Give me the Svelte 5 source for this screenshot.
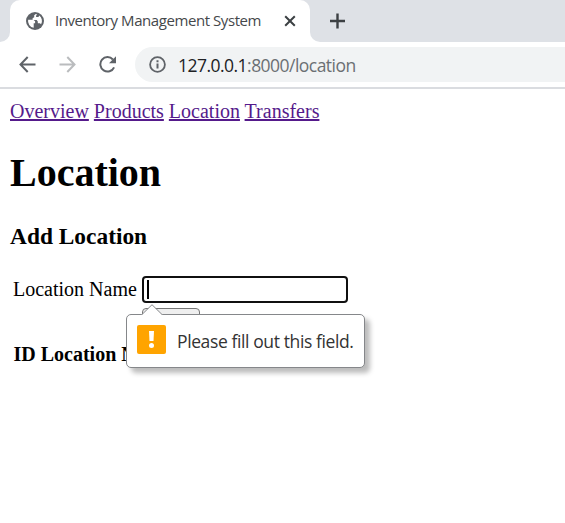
<script>
  const links = ['Overview', 'Products', 'Location', 'Transfers'];
</script>

<div class="window">
  <div class="tabs">
    <div class="edge"></div>
    <div class="tab">
      <svg class="globe" width="18" height="18" viewBox="0 0 18 18">
        <circle cx="9" cy="9" r="9" fill="#5f6368" />
        <path d="M9.8 2 8.2 3.3v1.9L6.6 6.3v1.8h4.1l1.1 1.3v1.8h2.1l1.2 1.1A7 7 0 0 0 13.2 3.4l-.7 1.5h-2.4V3.7L11 2.3z" fill="#fff" />
        <path d="M2.1 7.7h5.2l1.8 1.6v1.9H7.7v4.6A7 7 0 0 1 2.1 7.7z" fill="#fff" />
      </svg>
      <span class="title">Inventory Management System</span>
      <svg class="close" width="12" height="12" viewBox="0 0 12 12"><path d="m1.2 1.2 9.6 9.6m0-9.6-9.6 9.6" stroke="#3c4043" stroke-width="2" /></svg>
    </div>
    <div class="strip">
      <svg width="16" height="16" viewBox="0 0 16 16"><path d="M7.5 .5v15M0 8h15" stroke="#3c4043" stroke-width="2.4" /></svg>
    </div>
  </div>

  <div class="toolbar">
    <svg class="back" width="18" height="18" viewBox="0 0 18 18"><path d="M16.5 8.5H2M8.7 1 1.5 8.5l7.2 7.5" fill="none" stroke="#5f6368" stroke-width="2" /></svg>
    <svg class="forward" width="18" height="18" viewBox="0 0 18 18"><path d="M.5 8.5H15M8.3 1l7.2 7.5L8.3 16" fill="none" stroke="#babcbe" stroke-width="2" /></svg>
    <svg class="reload" width="18" height="18" viewBox="0 0 18 18">
      <path d="M15.1 11.3A7.2 7.2 0 1 1 13.9 3.5" fill="none" stroke="#5f6368" stroke-width="2" />
      <path d="M17 .2v7h-7z" fill="#5f6368" />
    </svg>
    <div class="address">
      <svg width="17" height="17" viewBox="0 0 17 17">
        <circle cx="8.5" cy="8.5" r="7.4" fill="none" stroke="#5f6368" stroke-width="1.8" />
        <path d="M8.5 4.2v2M8.5 7.4v5.2" stroke="#5f6368" stroke-width="2" />
      </svg>
      <span class="url">127.0.0.1<em>:8000/location</em></span>
    </div>
  </div>

  <main>
    <nav>{#each links as link}<a href="#{link}">{link}</a>{' '}{/each}</nav>
    <h1>Location</h1>
    <h3>Add Location</h3>
    <div class="field">
      <span>Location Name</span>
      <div class="input"><i></i></div>
    </div>
    <div class="submit"></div>
    <div class="heading">ID Location Name</div>
    <div class="bubble">
      <svg class="pointer" width="22" height="12" viewBox="0 0 22 12"><path d="M0 11.5 L11 .7 L22 11.5V12H0z" fill="#fff" /><path d="M1 10.5 11 .7l10 9.8" fill="none" stroke="#85878a" /></svg>
      <svg width="29" height="29" viewBox="0 0 29 29">
        <rect width="29" height="29" rx="2" fill="#ffa400" />
        <path d="M12 6h5l-.5 10h-4z" fill="#fff" />
        <circle cx="14.5" cy="20.4" r="2.5" fill="#fff" />
      </svg>
      <span class="message">Please fill out this field.</span>
    </div>
  </main>
</div>

<style>
  :global(body) { background: #fff; }
  .window { width: 565px; height: 523px; overflow: hidden; background: #fff; font-family: "Liberation Serif", serif; color: #000; }
  svg { display: block; flex: none; }
  .tabs { display: flex; height: 42px; background: #fff; }
  .edge { width: 10px; background: #dee1e6; border-bottom-right-radius: 10px; }
  .tab { position: relative; box-sizing: border-box; width: 300px; height: 42px; display: flex; align-items: center; padding-left: 16px; background: linear-gradient(#dee1e6 0 10px, #fff 10px); }
  .tab::before { content: ""; position: absolute; inset: 0; background: #fff; border-radius: 10px 10px 0 0; }
  .tab > * { position: relative; }
  .title { width: 206px; height: 22px; margin: -2px 0 0 11px; font: 15px/22px "Open Sans", sans-serif; color: #45484b; white-space: nowrap; letter-spacing: -.43px; }
  .close { margin-left: 23px; }
  .strip { flex: 1; display: flex; align-items: center; padding-left: 20px; background: #dee1e6; border-bottom-left-radius: 10px; }
  .toolbar { height: 45px; display: flex; align-items: center; border-bottom: 2px solid #dadce0; }
  .back { margin-left: 19px; }
  .forward { margin-left: 22px; }
  .reload { margin-left: 22px; }
  .address { flex: 1; height: 35px; margin-left: 18px; display: flex; align-items: center; padding-left: 14px; background: #f1f3f4; border-radius: 18px 0 0 18px; }
  .url { margin-left: 12px; font: 17.5px/24px "Open Sans", sans-serif; color: #202124; white-space: nowrap; letter-spacing: -.53px; }
  em { font-style: normal; color: #6b6f73; }
  main { position: relative; padding: 10px 10px 0; }
  nav { height: 24px; font-size: 20px; line-height: 24px; white-space: nowrap; }
  a { color: #551a8b; text-decoration: underline; text-decoration-thickness: 2px; text-underline-offset: 1px; }
  h1 { margin: 27px 0 0; font-size: 40px; line-height: 46px; }
  h3 { margin: 27px 0 0; font-size: 23.4px; line-height: 27px; }
  .field { display: flex; align-items: center; height: 27px; margin-top: 26px; padding-left: 3px; font-size: 20px; }
  .field span { width: 129px; white-space: nowrap; }
  .input { box-sizing: border-box; width: 206px; height: 27px; padding: 2px 0 0 3px; border: 2px solid #101010; border-radius: 4px; }
  .input i { display: block; width: 2px; height: 19px; background: #000; }
  .submit { box-sizing: border-box; width: 58px; height: 27px; margin: 5px 0 0 132px; background: #efefef; border: 1px solid #767676; border-radius: 4px; }
  .heading { margin: 7px 0 0 3.5px; font-size: 20px; line-height: 24px; font-weight: bold; white-space: nowrap; }
  .bubble { position: absolute; left: 126px; top: 225px; box-sizing: border-box; width: 239px; height: 54px; display: flex; align-items: center; padding: 0 0 4px 10px; background: #fff; border: 1px solid #85878a; border-radius: 5px; box-shadow: 5px 5px 5px #0004; }
  .pointer { position: absolute; left: 14px; top: -11px; }
  .message { margin: 4px 0 0 11px; font: 17.5px/26px "Open Sans", sans-serif; color: #333; white-space: nowrap; letter-spacing: -.39px; }
</style>
